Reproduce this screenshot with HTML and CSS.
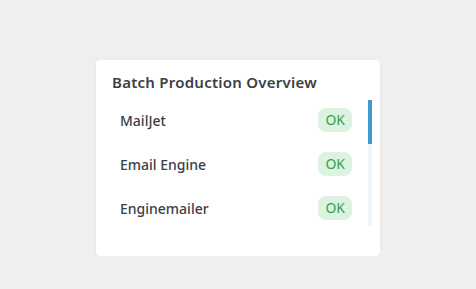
FILE: index.html
```html
<!DOCTYPE html>
<html lang="en">
<head>
    <meta charset="UTF-8">
    <meta name="viewport" content="width=device-width, initial-scale=1.0">
    <title>Batch Production Overview</title>
    <link rel="stylesheet" href="styles.css">
</head>
<body>
    <div class="card">
        <h2>Batch Production Overview</h2>
        <div class="list">
            <div class="rows">
                <div class="row"><span class="name">MailJet</span><span class="badge">OK</span></div>
                <div class="row"><span class="name">Email Engine</span><span class="badge">OK</span></div>
                <div class="row"><span class="name">Enginemailer</span><span class="badge">OK</span></div>
            </div>
            <!-- custom scrollbar -->
            <div class="track"><div class="thumb"></div></div>
        </div>
    </div>
</body>
</html>
```

FILE: styles.css
```css
body {
    font-family: "Noto Sans", sans-serif;
    background-color: #efefef;
    margin: 0;
    padding: 60px 0 0;
}
.card {
    width: 284px;
    height: 196px;
    box-sizing: border-box;
    margin: 0 auto;
    background-color: white;
    border-radius: 4px;
    box-shadow: 0 1px 3px rgba(0, 0, 0, 0.06);
    padding: 12px 8px 0 16px;
}
h2 {
    margin: 0 0 6px;
    font-size: 15px;
    line-height: 20px;
    font-weight: 600;
    letter-spacing: 0.25px;
    color: #3a3f44;
}
.list {
    display: flex;
    height: 130px;
}
.rows {
    flex: 1;
    overflow: hidden;
}
.track {
    width: 4px;
    margin: 2px 0;
    background-color: #eef5fa;
}
.thumb {
    height: 44px;
    background-color: #3f9bcc;
}
.row {
    display: flex;
    align-items: center;
    justify-content: space-between;
    height: 44px;
    padding: 0 16px 0 8px;
}
.name {
    font-size: 14px;
    font-weight: 500;
    color: #3b4045;
}
.badge {
    background-color: #dcf3e1;
    color: #2fa24c;
    font-size: 14px;
    line-height: 24px;
    padding: 0 7px;
    border-radius: 8px;
}
```
